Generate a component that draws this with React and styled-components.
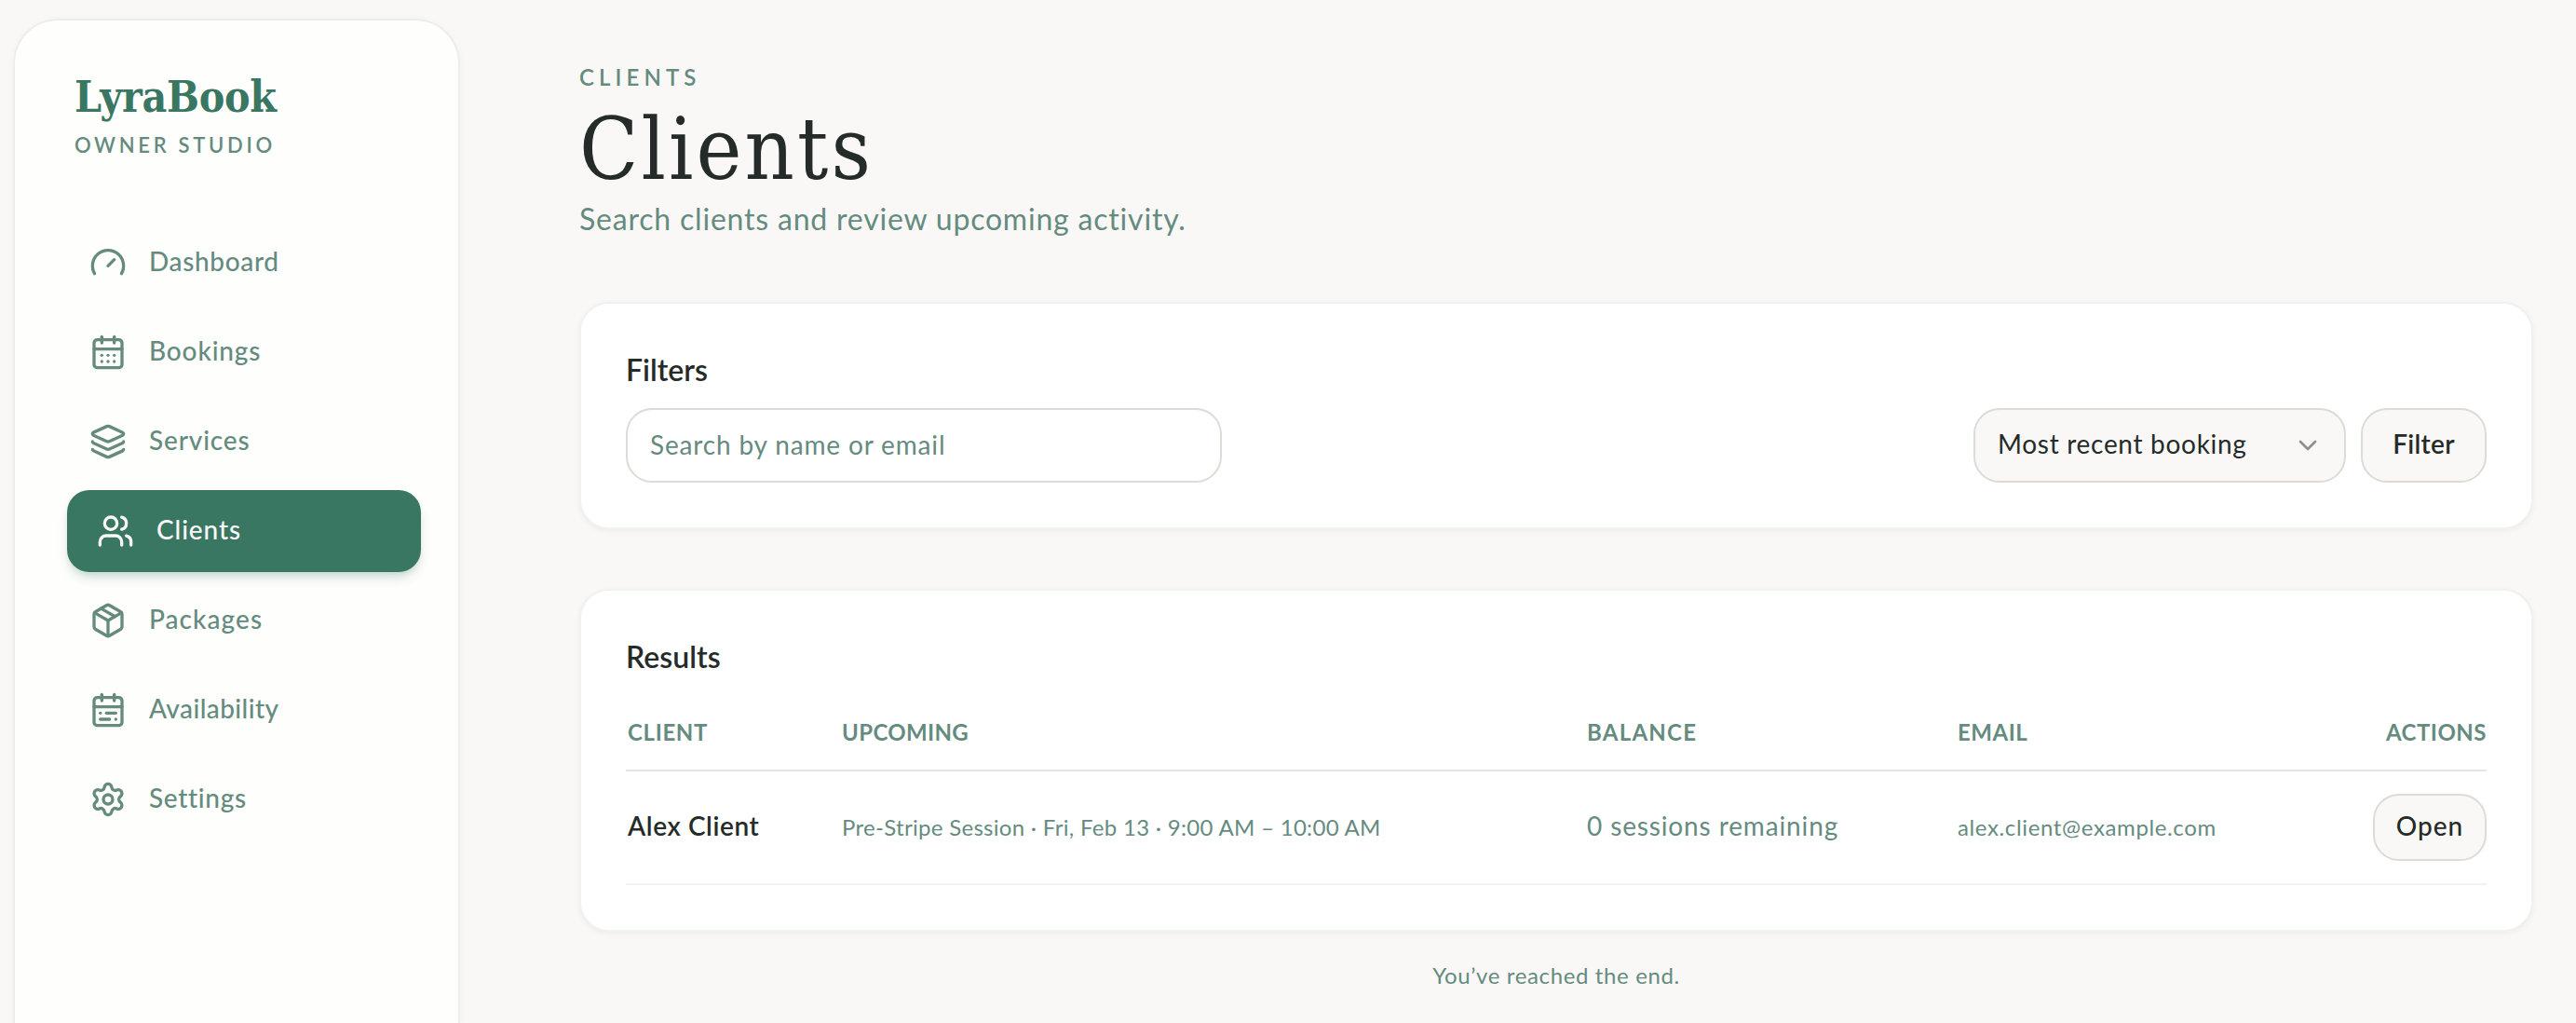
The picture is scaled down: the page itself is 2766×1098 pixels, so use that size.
import {
  CalendarDays,
  CalendarRange,
  ChevronDown,
  Gauge,
  Layers,
  Package,
  Settings,
  Users,
} from "lucide-react";
import { useState } from "react";
import styled, { createGlobalStyle } from "styled-components";

const GlobalStyle = createGlobalStyle`
  * {
    box-sizing: border-box;
  }
  body {
    margin: 0;
    background-color: #faf8f7;
    color: #242b28;
    font-family: "Lato", "Open Sans", sans-serif;
    overflow: hidden;
  }
`;

const Container = styled.div`
  display: flex;
  height: 100vh;
  overflow: hidden;
`;

// sidebar
const Sidebar = styled.aside`
  flex: none;
  width: 480px;
  margin: 20px 0 0 14px;
  padding: 54px 40px 0 56px;
  border: 2px solid #efedeb;
  border-bottom: none;
  border-radius: 48px 48px 0 0;
  background-color: #fefefc;
  box-shadow: 0 2px 8px rgba(0, 0, 0, 0.03);
`;
const Brand = styled.div`
  padding-left: 8px;
`;
const Logo = styled.div`
  font-family: "DejaVu Serif Condensed", "DejaVu Serif", serif;
  font-size: 46px;
  font-weight: 700;
  line-height: 56px;
  letter-spacing: -0.3px;
  color: #397763;
`;
const Tagline = styled.div`
  margin-top: 8px;
  font-size: 22px;
  font-weight: 600;
  line-height: 31px;
  letter-spacing: 3.7px;
  color: #658b7f;
`;
const Nav = styled.nav`
  display: flex;
  flex-direction: column;
  gap: 8px;
  margin-top: 67px;
`;
const NavItem = styled.a`
  display: flex;
  align-items: center;
  gap: 24px;
  height: 88px;
  padding-left: ${(props) => (props.$active ? "32px" : "24px")};
  border-radius: 24px;
  cursor: pointer;
  color: ${(props) => (props.$active ? "#faf8f7" : "#658b7f")};
  background-color: ${(props) => (props.$active ? "#397763" : "transparent")};
  box-shadow: ${(props) =>
    props.$active
      ? "0 8px 12px -2px rgba(57, 119, 99, 0.2), 0 4px 8px -4px rgba(57, 119, 99, 0.2)"
      : "none"};
`;
const NavLabel = styled.span`
  padding-bottom: 4px;
  font-size: 28px;
  font-weight: 500;
  line-height: 40px;
  letter-spacing: ${(props) => props.$tracking}px;
`;

// page header
const Main = styled.main`
  flex: 1;
  min-width: 0;
  padding: 65px 46px 0 128px;
`;
const Eyebrow = styled.div`
  font-size: 24px;
  font-weight: 600;
  line-height: 36px;
  letter-spacing: 5.1px;
  color: #658b7f;
`;
const Title = styled.h1`
  margin: 10px 0 1px;
  font-family: "DejaVu Serif Condensed", "DejaVu Serif", serif;
  font-size: 92px;
  font-weight: 400;
  line-height: 99px;
  letter-spacing: 3.1px;
`;
const Subtitle = styled.p`
  margin: 0 0 66px;
  font-size: 32px;
  line-height: 47px;
  letter-spacing: 0.8px;
  color: #658b7f;
`;

// cards
const Card = styled.section`
  padding: 48px;
  border: 2px solid #f2f1ef;
  border-radius: 32px;
  background-color: white;
  box-shadow: 0 2px 6px rgba(0, 0, 0, 0.05);
  & + & {
    margin-top: 64px;
  }
`;
const CardTitle = styled.h2`
  margin: 1px 0 20px;
  font-size: 32px;
  font-weight: 600;
  line-height: 43px;
`;
const FilterBar = styled.div`
  display: flex;
  align-items: center;
  justify-content: space-between;
`;
const FilterActions = styled.div`
  display: flex;
  gap: 16px;
`;
const SearchInput = styled.input`
  width: 640px;
  height: 80px;
  padding: 0 24px 2px;
  border: 2px solid #dedbd6;
  border-radius: 28px;
  outline: none;
  background-color: white;
  color: #242b28;
  font-family: inherit;
  font-size: 28px;
  letter-spacing: 0.84px;
  &::placeholder {
    color: #658b7f;
    opacity: 1;
  }
`;
const SortSelect = styled.button`
  display: flex;
  align-items: center;
  justify-content: space-between;
  width: 400px;
  height: 80px;
  padding: 0 23px 0 24px;
  border: 2px solid #dedbd6;
  border-radius: 28px;
  background-color: #faf8f7;
  color: #242b28;
  font-family: inherit;
  font-size: 28px;
  letter-spacing: 0.7px;
  cursor: pointer;
  svg {
    opacity: 0.5;
  }
`;
const SortLabel = styled.span`
  padding-bottom: 5px;
`;
const Button = styled.button`
  width: ${(props) => (props.$small ? "122px" : "135px")};
  height: ${(props) => (props.$small ? "72px" : "80px")};
  padding: 0 0 5px;
  border: 2px solid #dedbd6;
  border-radius: 28px;
  background-color: #faf8f7;
  color: #242b28;
  font-family: inherit;
  font-size: 28px;
  font-weight: ${(props) => (props.$small ? 500 : 600)};
  letter-spacing: ${(props) => (props.$small ? "1px" : "0.3px")};
  cursor: pointer;
`;

// results table
const Row = styled.div`
  display: grid;
  grid-template-columns: 230px 800px 398px 1fr auto;
  align-items: center;
  padding: 24px 0;
  border-bottom: 2px solid #f2f2f1;
`;
const HeadRow = styled(Row)`
  height: 82px;
  padding: 0;
  border-bottom-color: #e7e7e1;
`;
const HeadCell = styled.div`
  padding: 0 2px 1px;
  font-size: 24px;
  font-weight: 700;
  line-height: 36px;
  letter-spacing: ${(props) => props.$tracking}px;
  color: #658b7f;
  &:last-child {
    padding-right: 0;
  }
`;
const NameCell = styled.div`
  padding: 0 2px 4px;
  font-size: 28px;
  font-weight: 600;
  letter-spacing: 0.6px;
`;
const SmallCell = styled.div`
  padding: 0 2px 2px;
  font-size: 24px;
  letter-spacing: ${(props) => props.$tracking}px;
  color: #658b7f;
`;
const BalanceCell = styled.div`
  padding: 0 2px 4px;
  font-size: 28px;
  letter-spacing: 0.87px;
  color: #658b7f;
`;
const EndNote = styled.p`
  margin: 29px 0 0;
  text-align: center;
  font-size: 24px;
  line-height: 36px;
  letter-spacing: 0.63px;
  color: #658b7f;
`;

const navItems = [
  { label: "Dashboard", icon: Gauge, tracking: 0.65 },
  { label: "Bookings", icon: CalendarDays, tracking: 0.85 },
  { label: "Services", icon: Layers, tracking: 0.85 },
  { label: "Clients", icon: Users, tracking: 0.9 },
  { label: "Packages", icon: Package, tracking: 1.07 },
  { label: "Availability", icon: CalendarRange, tracking: 0.42 },
  { label: "Settings", icon: Settings, tracking: 0.68 },
];

const columns = [
  { label: "CLIENT", tracking: 0.65 },
  { label: "UPCOMING", tracking: 0.35 },
  { label: "BALANCE", tracking: 1.25 },
  { label: "EMAIL", tracking: 0.5 },
  { label: "ACTIONS", tracking: 0.5 },
];

const clients = [
  {
    name: "Alex Client",
    upcoming: "Pre-Stripe Session · Fri, Feb 13 · 9:00 AM – 10:00 AM",
    balance: "0 sessions remaining",
    email: "alex.client@example.com",
  },
];

function App() {
  const [active, setActive] = useState("Clients");
  const [search, setSearch] = useState("");

  return (
    <Container>
      <GlobalStyle />
      <Sidebar>
        <Brand>
          <Logo>LyraBook</Logo>
          <Tagline>OWNER STUDIO</Tagline>
        </Brand>
        <Nav>
          {navItems.map(({ label, icon: Icon, tracking }) => (
            <NavItem
              key={label}
              $active={label === active}
              onClick={() => setActive(label)}
            >
              <Icon size={40} />
              <NavLabel $tracking={tracking}>{label}</NavLabel>
            </NavItem>
          ))}
        </Nav>
      </Sidebar>
      <Main>
        <Eyebrow>CLIENTS</Eyebrow>
        <Title>Clients</Title>
        <Subtitle>Search clients and review upcoming activity.</Subtitle>
        <Card>
          <CardTitle>Filters</CardTitle>
          <FilterBar>
            <SearchInput
              placeholder="Search by name or email"
              value={search}
              onChange={(e) => setSearch(e.target.value)}
            />
            <FilterActions>
              <SortSelect>
                <SortLabel>Most recent booking</SortLabel>
                <ChevronDown size={32} />
              </SortSelect>
              <Button>Filter</Button>
            </FilterActions>
          </FilterBar>
        </Card>
        <Card>
          <CardTitle>Results</CardTitle>
          <HeadRow>
            {columns.map((col) => (
              <HeadCell key={col.label} $tracking={col.tracking}>
                {col.label}
              </HeadCell>
            ))}
          </HeadRow>
          {clients.map((client) => (
            <Row key={client.email}>
              <NameCell>{client.name}</NameCell>
              <SmallCell $tracking={0.3}>{client.upcoming}</SmallCell>
              <BalanceCell>{client.balance}</BalanceCell>
              <SmallCell $tracking={0.63}>{client.email}</SmallCell>
              <Button $small>Open</Button>
            </Row>
          ))}
        </Card>
        <EndNote>You’ve reached the end.</EndNote>
      </Main>
    </Container>
  );
}

export default App;
